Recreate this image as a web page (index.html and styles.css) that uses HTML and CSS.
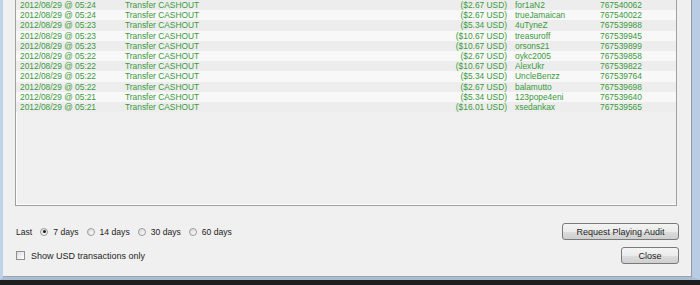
FILE: index.html
```html
<!DOCTYPE html>
<html lang="en">
  <head>
    <meta charset="UTF-8" />
    <meta name="viewport" content="width=device-width, initial-scale=1.0" />
    <title>Transaction History</title>
    <link rel="stylesheet" href="styles.css">
  </head>
  <body>
    <div class="screen">
      <div class="dialog">
        <div class="history" id="history"></div>

        <div class="footer">
          <div class="filters">
            <div class="period">
              <span class="period-label">Last</span>
              <label class="radio"><span class="dot checked"></span>7 days</label>
              <label class="radio"><span class="dot"></span>14 days</label>
              <label class="radio"><span class="dot"></span>30 days</label>
              <label class="radio"><span class="dot"></span>60 days</label>
            </div>
            <label class="check"><span class="box"></span>Show USD transactions only</label>
          </div>
          <div class="buttons">
            <button class="btn btn-audit">Request Playing Audit</button>
            <button class="btn btn-close">Close</button>
          </div>
        </div>
      </div>
    </div>

    <script>
      const transactions = [
        { time: "05:24", amount: "2.67", player: "for1aN2", id: 767540062 },
        { time: "05:24", amount: "2.67", player: "trueJamaican", id: 767540022 },
        { time: "05:23", amount: "5.34", player: "4uTyneZ", id: 767539988 },
        { time: "05:23", amount: "10.67", player: "treasuroff", id: 767539945 },
        { time: "05:23", amount: "10.67", player: "orsons21", id: 767539899 },
        { time: "05:22", amount: "2.67", player: "oykc2005", id: 767539858 },
        { time: "05:22", amount: "10.67", player: "AlexUkr", id: 767539822 },
        { time: "05:22", amount: "5.34", player: "UncleBenzz", id: 767539764 },
        { time: "05:22", amount: "2.67", player: "balamutto", id: 767539698 },
        { time: "05:21", amount: "5.34", player: "123pope4eni", id: 767539640 },
        { time: "05:21", amount: "16.01", player: "xsedankax", id: 767539565 },
      ];

      function renderHistory(list) {
        const box = document.getElementById("history");
        box.innerHTML = "";
        list.forEach((t) => {
          const row = document.createElement("div");
          row.className = "row";
          row.innerHTML = `
            <span>2012/08/29 @ ${t.time}</span>
            <span>Transfer CASHOUT</span>
            <span class="amount">($${t.amount} USD)</span>
            <span class="player">${t.player}</span>
            <span>${t.id}</span>
          `;
          box.appendChild(row);
        });
      }

      renderHistory(transactions);
    </script>
  </body>
</html>
```

FILE: styles.css
```css
body {
  margin: 0;
  font-family: "Liberation Sans", Arial, sans-serif;
}

.screen {
  width: 700px;
  height: 285px;
  background-color: #1e1e1e;
  overflow: hidden;
}

.dialog {
  height: 277px;
  background-color: #f0f0f0;
  border-left: 3px solid #bfd2e8;
  border-right: 8px solid #b8cde4;
  border-bottom: 3px solid #a9bdd3;
  box-shadow: inset -1px 0 #8e99a6, inset 0 -1px #9aa3ad;
}

.history {
  margin: 0 15px 0 12px;
  height: 205px;
  border: 1px solid #a0a0a0;
  border-top: none;
  box-shadow: inset 1px 0 #fdfdfd, inset 0 -1px #fdfdfd;
  background-color: #f0f0f0;
}

.row {
  display: grid;
  grid-template-columns: 105px 190px 192px 93px auto;
  height: 10.2px;
  line-height: 10.2px;
  padding-left: 4px;
  font-size: 8.4px;
  color: #3a9a3c;
  white-space: nowrap;
}
.row:nth-child(odd) {
  background-color: #ededed;
}
.row:nth-child(even) {
  background-color: #f8f8f8;
}
.amount {
  text-align: right;
}
.player {
  padding-left: 8px;
}

.footer {
  display: flex;
  justify-content: space-between;
  padding: 17px 13px 0 13px;
  font-size: 9px;
  color: #1e1e1e;
}

.filters {
  display: flex;
  flex-direction: column;
  gap: 7px;
}

.period,
.check {
  display: flex;
  align-items: center;
  height: 17px;
}

.period {
  font-size: 8.6px;
}

.period-label {
  margin-right: 8px;
}

.radio {
  display: flex;
  align-items: center;
  margin-right: 8px;
}

.dot {
  box-sizing: border-box;
  width: 8px;
  height: 8px;
  margin-right: 5px;
  border-radius: 50%;
  border: 1px solid #9a9a9a;
  background: linear-gradient(135deg, #d8d8d8, #ffffff);
  position: relative;
}
.dot.checked::after {
  content: "";
  position: absolute;
  left: 1.5px;
  top: 1.5px;
  width: 3px;
  height: 3px;
  border-radius: 50%;
  background-color: #1a1a1a;
}

.box {
  box-sizing: border-box;
  width: 9px;
  height: 9px;
  margin-right: 6px;
  border: 1px solid #8e8f8f;
  background: linear-gradient(135deg, #dcdcdc, #ffffff);
}

.buttons {
  display: flex;
  flex-direction: column;
  align-items: flex-end;
  gap: 7px;
}

.btn {
  height: 17px;
  padding: 0;
  border: 1px solid #7a7a7a;
  border-radius: 3px;
  background: linear-gradient(#f4f4f4 0%, #ebebeb 50%, #dddddd 51%, #cfcfcf 100%);
  font-family: "Liberation Sans", Arial, sans-serif;
  font-size: 9px;
  color: #1e1e1e;
}
.btn-audit {
  width: 117px;
}
.btn-close {
  width: 58px;
}
```
